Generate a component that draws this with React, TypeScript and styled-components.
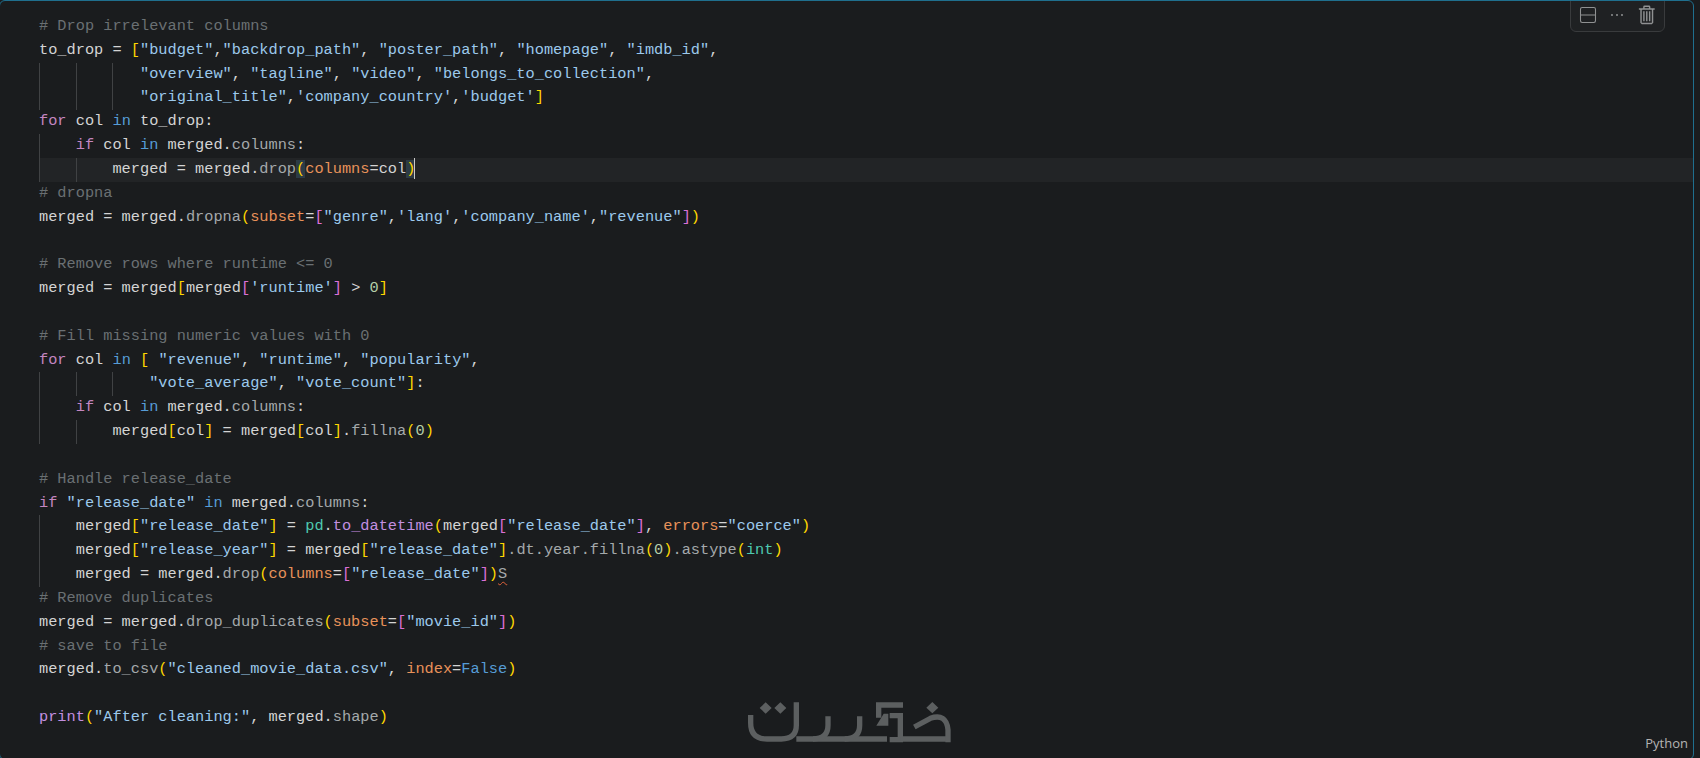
import { ReactNode } from "react";
import styled, { createGlobalStyle } from "styled-components";
import { Rows2 } from "lucide-react";
import { VscEllipsis, VscTrash } from "react-icons/vsc";

const GlobalStyle = createGlobalStyle`
    html, body {
        margin: 0;
        height: 100%;
        overflow: hidden;
        background: #1a1c1e;
    }
`;

const Cell = styled.div`
    position: relative;
    display: flex;
    flex-direction: column;
    box-sizing: border-box;
    width: 1695px;
    height: 760px;
    margin-left: -1px;
    overflow: hidden;
    background: #1a1c1e;
    border: 1px solid #1f6f8e;
    border-radius: 6px;
`;

const Code = styled.div`
    flex: 1;
    padding: 14px 0 0 39px;
    font-family: "Liberation Mono", monospace;
    font-size: 15.3px;
`;

const Line = styled.div<{ $guides?: number; $active?: boolean }>`
    height: 23.83px;
    line-height: 23.83px;
    white-space: pre;
    color: #d4d4d4;
    background-color: ${({ $active }) => ($active ? "#222426" : "transparent")};
    background-image: repeating-linear-gradient(to right, #404244 0 1px, transparent 1px 4ch);
    background-repeat: no-repeat;
    background-size: ${({ $guides }) => ($guides ?? 0) * 4}ch 100%;
`;

const colors: Record<string, string> = {
    c: "#6a7073",
    k: "#c586c0",
    o: "#569cd6",
    s: "#9cc9ec",
    d: "#a4a9ab",
    p: "#e8925a",
    t: "#4ec9b0",
    f: "#c38fe0",
    y: "#ffd700",
    h: "#ffd700",
    m: "#da70d6",
    v: "#b5cea8",
    n: "#d4d4d4",
};

const Token = styled.span<{ $kind: string }>`
    color: ${({ $kind }) => colors[$kind]};
    background: ${({ $kind }) => ($kind === "h" ? "#2c3c46" : "transparent")};
`;

const Cursor = styled.span`
    display: inline-block;
    width: 1px;
    height: 21px;
    margin-left: -1px;
    vertical-align: middle;
    background: #c8c8c8;
`;

const Squiggle = styled.span`
    color: #a4a9ab;
    text-decoration: underline wavy #e0623a 1px;
    text-underline-offset: 3px;
`;

const Toolbar = styled.div`
    position: absolute;
    top: -1px;
    right: 28px;
    display: flex;
    align-items: center;
    justify-content: space-between;
    box-sizing: border-box;
    width: 95px;
    height: 32px;
    padding: 0 5px 2px 7px;
    color: #8f9192;
    background: #1f2123;
    border: 1px solid #393b3d;
    border-radius: 0 0 6px 6px;
`;

const Watermark = styled.svg`
    position: absolute;
    left: 748px;
    bottom: 16px;
    width: 204px;
    height: 41px;
    stroke: #5c5f60;
    fill: none;
`;

const WatermarkDot = styled.path`
    fill: #5c5f60;
    stroke: none;
`;

const Footer = styled.div`
    display: flex;
    justify-content: flex-end;
    height: 28px;
    padding-right: 5px;
    font-family: "Open Sans", sans-serif;
    font-size: 13px;
    line-height: 24px;
    color: #b4b4b4;
`;

type Part = [string, string];

const t = (kind: string, text: string): Part => [kind, text];

const rows: { parts: Part[]; guides?: number; active?: boolean; extra?: ReactNode }[] = [
    { parts: [t("c", "# Drop irrelevant columns")] },
    { parts: [t("n", "to_drop = "), t("y", "["), t("s", `"budget"`), t("n", ","), t("s", `"backdrop_path"`), t("n", ", "), t("s", `"poster_path"`), t("n", ", "), t("s", `"homepage"`), t("n", ", "), t("s", `"imdb_id"`), t("n", ",")] },
    { guides: 3, parts: [t("n", "           "), t("s", `"overview"`), t("n", ", "), t("s", `"tagline"`), t("n", ", "), t("s", `"video"`), t("n", ", "), t("s", `"belongs_to_collection"`), t("n", ",")] },
    { guides: 3, parts: [t("n", "           "), t("s", `"original_title"`), t("n", ","), t("s", `'company_country'`), t("n", ","), t("s", `'budget'`), t("y", "]")] },
    { parts: [t("k", "for"), t("n", " col "), t("o", "in"), t("n", " to_drop:")] },
    { guides: 1, parts: [t("n", "    "), t("k", "if"), t("n", " col "), t("o", "in"), t("n", " merged."), t("d", "columns"), t("n", ":")] },
    { guides: 2, active: true, extra: <Cursor />, parts: [t("n", "        merged = merged."), t("d", "drop"), t("h", "("), t("p", "columns"), t("n", "=col"), t("h", ")")] },
    { parts: [t("c", "# dropna")] },
    { parts: [t("n", "merged = merged."), t("d", "dropna"), t("y", "("), t("p", "subset"), t("n", "="), t("m", "["), t("s", `"genre"`), t("n", ","), t("s", `'lang'`), t("n", ","), t("s", `'company_name'`), t("n", ","), t("s", `"revenue"`), t("m", "]"), t("y", ")")] },
    { parts: [] },
    { parts: [t("c", "# Remove rows where runtime <= 0")] },
    { parts: [t("n", "merged = merged"), t("y", "["), t("n", "merged"), t("m", "["), t("s", `'runtime'`), t("m", "]"), t("n", " > "), t("v", "0"), t("y", "]")] },
    { parts: [] },
    { parts: [t("c", "# Fill missing numeric values with 0")] },
    { parts: [t("k", "for"), t("n", " col "), t("o", "in"), t("n", " "), t("y", "["), t("n", " "), t("s", `"revenue"`), t("n", ", "), t("s", `"runtime"`), t("n", ", "), t("s", `"popularity"`), t("n", ",")] },
    { guides: 3, parts: [t("n", "            "), t("s", `"vote_average"`), t("n", ", "), t("s", `"vote_count"`), t("y", "]"), t("n", ":")] },
    { guides: 1, parts: [t("n", "    "), t("k", "if"), t("n", " col "), t("o", "in"), t("n", " merged."), t("d", "columns"), t("n", ":")] },
    { guides: 2, parts: [t("n", "        merged"), t("y", "["), t("n", "col"), t("y", "]"), t("n", " = merged"), t("y", "["), t("n", "col"), t("y", "]"), t("n", "."), t("d", "fillna"), t("y", "("), t("v", "0"), t("y", ")")] },
    { parts: [] },
    { parts: [t("c", "# Handle release_date")] },
    { parts: [t("k", "if"), t("n", " "), t("s", `"release_date"`), t("n", " "), t("o", "in"), t("n", " merged."), t("d", "columns"), t("n", ":")] },
    { guides: 1, parts: [t("n", "    merged"), t("y", "["), t("s", `"release_date"`), t("y", "]"), t("n", " = "), t("t", "pd"), t("n", "."), t("f", "to_datetime"), t("y", "("), t("n", "merged"), t("m", "["), t("s", `"release_date"`), t("m", "]"), t("n", ", "), t("p", "errors"), t("n", "="), t("s", `"coerce"`), t("y", ")")] },
    { guides: 1, parts: [t("n", "    merged"), t("y", "["), t("s", `"release_year"`), t("y", "]"), t("n", " = merged"), t("y", "["), t("s", `"release_date"`), t("y", "]"), t("d", ".dt.year.fillna"), t("y", "("), t("v", "0"), t("y", ")"), t("d", ".astype"), t("y", "("), t("t", "int"), t("y", ")")] },
    { guides: 1, extra: <Squiggle>S</Squiggle>, parts: [t("n", "    merged = merged."), t("d", "drop"), t("y", "("), t("p", "columns"), t("n", "="), t("m", "["), t("s", `"release_date"`), t("m", "]"), t("y", ")")] },
    { parts: [t("c", "# Remove duplicates")] },
    { parts: [t("n", "merged = merged."), t("d", "drop_duplicates"), t("y", "("), t("p", "subset"), t("n", "="), t("m", "["), t("s", `"movie_id"`), t("m", "]"), t("y", ")")] },
    { parts: [t("c", "# save to file")] },
    { parts: [t("n", "merged."), t("d", "to_csv"), t("y", "("), t("s", `"cleaned_movie_data.csv"`), t("n", ", "), t("p", "index"), t("n", "="), t("o", "False"), t("y", ")")] },
    { parts: [] },
    { parts: [t("f", "print"), t("y", "("), t("s", `"After cleaning:"`), t("n", ", merged."), t("d", "shape"), t("y", ")")] },
];

export default function App() {
    return (
        <>
            <GlobalStyle />
            <Cell>
                <Toolbar>
                    <Rows2 size={20} strokeWidth={1.3} />
                    <VscEllipsis size={16} />
                    <VscTrash size={23} />
                </Toolbar>
                <Code>
                    {rows.map((row, i) => (
                        <Line key={i} $guides={row.guides} $active={row.active}>
                            {row.parts.map(([kind, text], j) => (
                                <Token key={j} $kind={kind}>{text}</Token>
                            ))}
                            {row.extra}
                        </Line>
                    ))}
                </Code>
                <Footer>Python</Footer>
                <Watermark viewBox="205 95 612 123" aria-hidden="true">
                    <g strokeWidth="16">
                        <path d="M213 134V158Q213 206 262 206H305Q350 206 350 165V96" />
                        <path d="M350 206H622" />
                        <path d="M445 138V165Q445 206 400 206" />
                        <path d="M540 138V165Q540 206 495 206" />
                        <path d="M670 104H597V142" />
                        <path d="M630 136H662V208H630" />
                        <path d="M662 206H807" />
                        <path d="M704 170L752 144Q800 128 805 178V216" />
                    </g>
                    <WatermarkDot d="M258 96l18 17-18 17-18-17zM302 96l18 17-18 17-18-17zM758 95l18 17-18 17-18-17zM612 130l14 0 0 36-36 0z" />
                </Watermark>
            </Cell>
        </>
    );
}
